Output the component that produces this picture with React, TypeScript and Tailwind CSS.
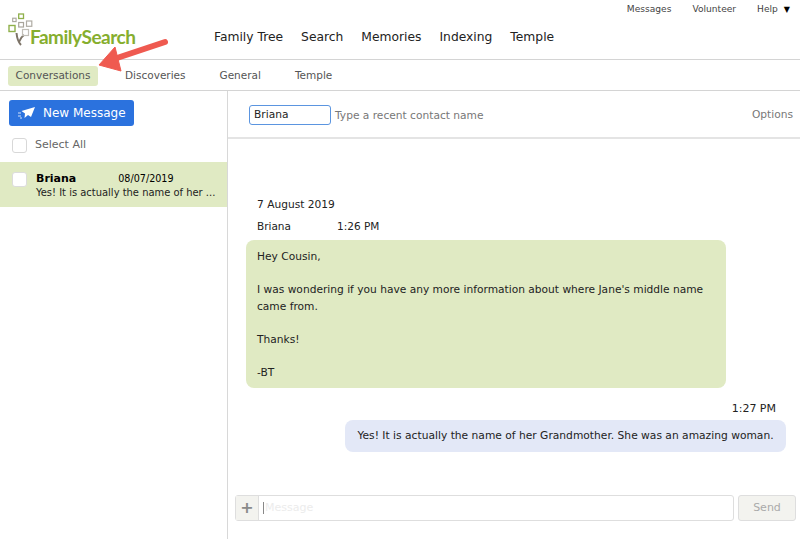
import React from "react";

const font = "font-['DejaVu_Sans',sans-serif]";

function Logo() {
  return (
    <div className="relative w-[140px] h-[40px] shrink-0">
      <svg className="absolute left-0 top-0" width="40" height="48" viewBox="0 0 40 48" fill="none">
        <path d="M21 45 C18 42 17 38 16.5 33 M19 42 C20 39 21 37 24 35" stroke="#7d7468" strokeWidth="2" />
        <rect x="18.7" y="14" width="4.8" height="4.5" stroke="#8fb04a" strokeWidth="1.3" />
        <rect x="12.7" y="18.2" width="3.4" height="3.4" stroke="#a9a59c" strokeWidth="1.1" />
        <rect x="18.7" y="22.5" width="4.8" height="4.5" stroke="#a9a59c" strokeWidth="1.2" />
        <rect x="26.5" y="21" width="5.3" height="5.3" stroke="#b0aca4" strokeWidth="1.2" />
        <rect x="9" y="25.5" width="6" height="6" stroke="#8fb04a" strokeWidth="1.4" />
        <rect x="22.5" y="29.5" width="6" height="6" stroke="#c2bfb8" strokeWidth="1.2" />
      </svg>
      <span className="absolute left-[30px] top-[25px] text-[19px] leading-[24px] font-bold tracking-[-0.5px] text-[#86ae2e] font-['Lato',sans-serif] whitespace-nowrap">
        FamilySearch
      </span>
    </div>
  );
}

export default function App() {
  return (
    <div className={`${font} relative w-[800px] h-[539px] overflow-hidden bg-white text-[#333]`}>
      <header className="relative h-[60px] border-b border-[#d4d4d4]">
        <div className="absolute right-[10px] top-[3px] flex items-center text-[9.1px] leading-[13px] text-[#444]">
          <span>Messages</span>
          <span className="ml-[21px]">Volunteer</span>
          <span className="ml-[21px]">Help</span>
          <span className="ml-[6px] text-[8px] text-black">▼</span>
        </div>
        <div className="flex items-start">
          <Logo />
          <nav className="ml-[74px] mt-[28px] flex gap-[18px] text-[12.3px] leading-[18px] text-[#222]">
            <span>Family Tree</span>
            <span>Search</span>
            <span>Memories</span>
            <span>Indexing</span>
            <span>Temple</span>
          </nav>
        </div>
      </header>

      <div className="flex h-[31px] items-center border-b border-[#d4d4d4] pl-[8px] pt-[1px] text-[10.5px] text-[#555]">
        <span className="flex h-[20px] w-[90px] items-center justify-center rounded-[3px] bg-[#e0eac3]">Conversations</span>
        <span className="ml-[27px]">Discoveries</span>
        <span className="ml-[34px]">General</span>
        <span className="ml-[34px]">Temple</span>
      </div>

      <div className="flex h-[448px]">
        <aside className="w-[228px] shrink-0 border-r border-[#d8d8d8]">
          <div className="ml-[9px] mt-[9px] flex h-[26px] w-[125px] items-center rounded-[3px] bg-[#2b72de] pl-[9px] text-[12px] font-medium text-white">
            <svg width="18" height="12" viewBox="0 0 18 12" fill="white">
              <path d="M17 0 L3.5 4 L7 6.5 L6.5 11 L10 8 L13 10 Z" />
              <path d="M0 6h3M0 9h3M2 11h2" stroke="white" strokeWidth="0.8" />
            </svg>
            <span className="ml-[7px]">New Message</span>
          </div>
          <div className="ml-[12px] mt-[11px] flex h-[16px] items-center text-[11px] text-[#666]">
            <span className="h-[15px] w-[15px] rounded-[3px] border border-[#d8d8d8] bg-white" />
            <span className="ml-[8px]">Select All</span>
          </div>
          <div className="mt-[9px] flex h-[45px] bg-[#e0eac3] pl-[12px] pt-[10px]">
            <span className="h-[15px] w-[15px] rounded-[3px] border border-[#dcdcdc] bg-white" />
            <div className="ml-[9px] -mt-[1px] w-[175px] text-black">
              <div className="flex items-center h-[16px]">
                <span className="text-[11px] font-bold">Briana</span>
                <span className="ml-[42px] text-[9.6px]">08/07/2019</span>
              </div>
              <div className="-mt-[1px] whitespace-nowrap text-[9.95px] leading-[13px] text-[#222]">Yes! It is actually the name of her ...</div>
            </div>
          </div>
        </aside>

        <main className="relative flex-1">
          <div className="flex h-[48px] items-center border-b-2 border-[#e4e4e4] pl-[21px] pr-[7px] text-[10.65px] text-[#777]">
            <div className="mt-[1px] flex h-[20px] w-[82px] items-center rounded-[3px] border border-[#5b95e0] pl-[4px] text-[#222]">Briana</div>
            <span className="ml-[4px] mt-[3px]">Type a recent contact name</span>
            <span className="ml-auto mt-[1px]">Options</span>
          </div>

          <div className="pl-[18px] pr-[14px] text-[10.65px] text-[#222]">
            <div className="ml-[11px] mt-[59px] h-[14px] leading-[14px]">7 August 2019</div>
            <div className="ml-[11px] mt-[7px] flex h-[14px] text-[10.5px] leading-[14px]">
              <span className="w-[80px]">Briana</span>
              <span>1:26 PM</span>
            </div>
            <div className="mt-[7px] h-[148px] w-[480px] rounded-[8px] bg-[#e0eac3] px-[11px] pb-[8px] pt-[9px] leading-[16.6px]">
              <p>Hey Cousin,</p>
              <p className="mt-[16.6px]">I was wondering if you have any more information about where Jane's middle name came from.</p>
              <p className="mt-[16.6px]">Thanks!</p>
              <p className="mt-[16.6px]">-BT</p>
            </div>
            <div className="mt-[14px] pr-[10px] text-right text-[11px] leading-[14px]">1:27 PM</div>
            <div className="flex justify-end mt-[4px]">
              <div className="flex h-[32px] w-[441px] items-center justify-center rounded-[8px] bg-[#e3e8f7] text-[10.7px] text-[#222]">
                Yes! It is actually the name of her Grandmother. She was an amazing woman.
              </div>
            </div>
          </div>

          <div className="absolute bottom-[18px] left-[7px] flex w-[561px] gap-[4px]">
            <div className="flex h-[26px] flex-1 rounded-[3px] border border-[#dedede]">
              <div className="flex w-[23px] items-center justify-center border-r border-[#dedede] bg-[#f3f3ef] text-[16px] font-bold text-[#8a8a8a]">+</div>
              <div className="flex flex-1 items-center pl-[4px] text-[11px] text-[#ececec]">
                <span className="mr-[1px] h-[12px] w-px bg-[#888]" />Message
              </div>
            </div>
            <div className="flex h-[26px] w-[58px] items-center justify-center rounded-[3px] border border-[#dedede] bg-[#f3f3ef] text-[11px] text-[#aaa]">Send</div>
          </div>
        </main>
      </div>

      <svg className="absolute left-[95px] top-[36px]" width="78" height="40" viewBox="95 36 78 40">
        <path d="M165 42 L114 59" stroke="#ef5a50" strokeWidth="6" strokeLinecap="round" />
        <path d="M99 65 L115 47 L121 71 Z" fill="#ef5a50" stroke="#ef5a50" strokeWidth="1" strokeLinejoin="round" />
      </svg>
    </div>
  );
}
